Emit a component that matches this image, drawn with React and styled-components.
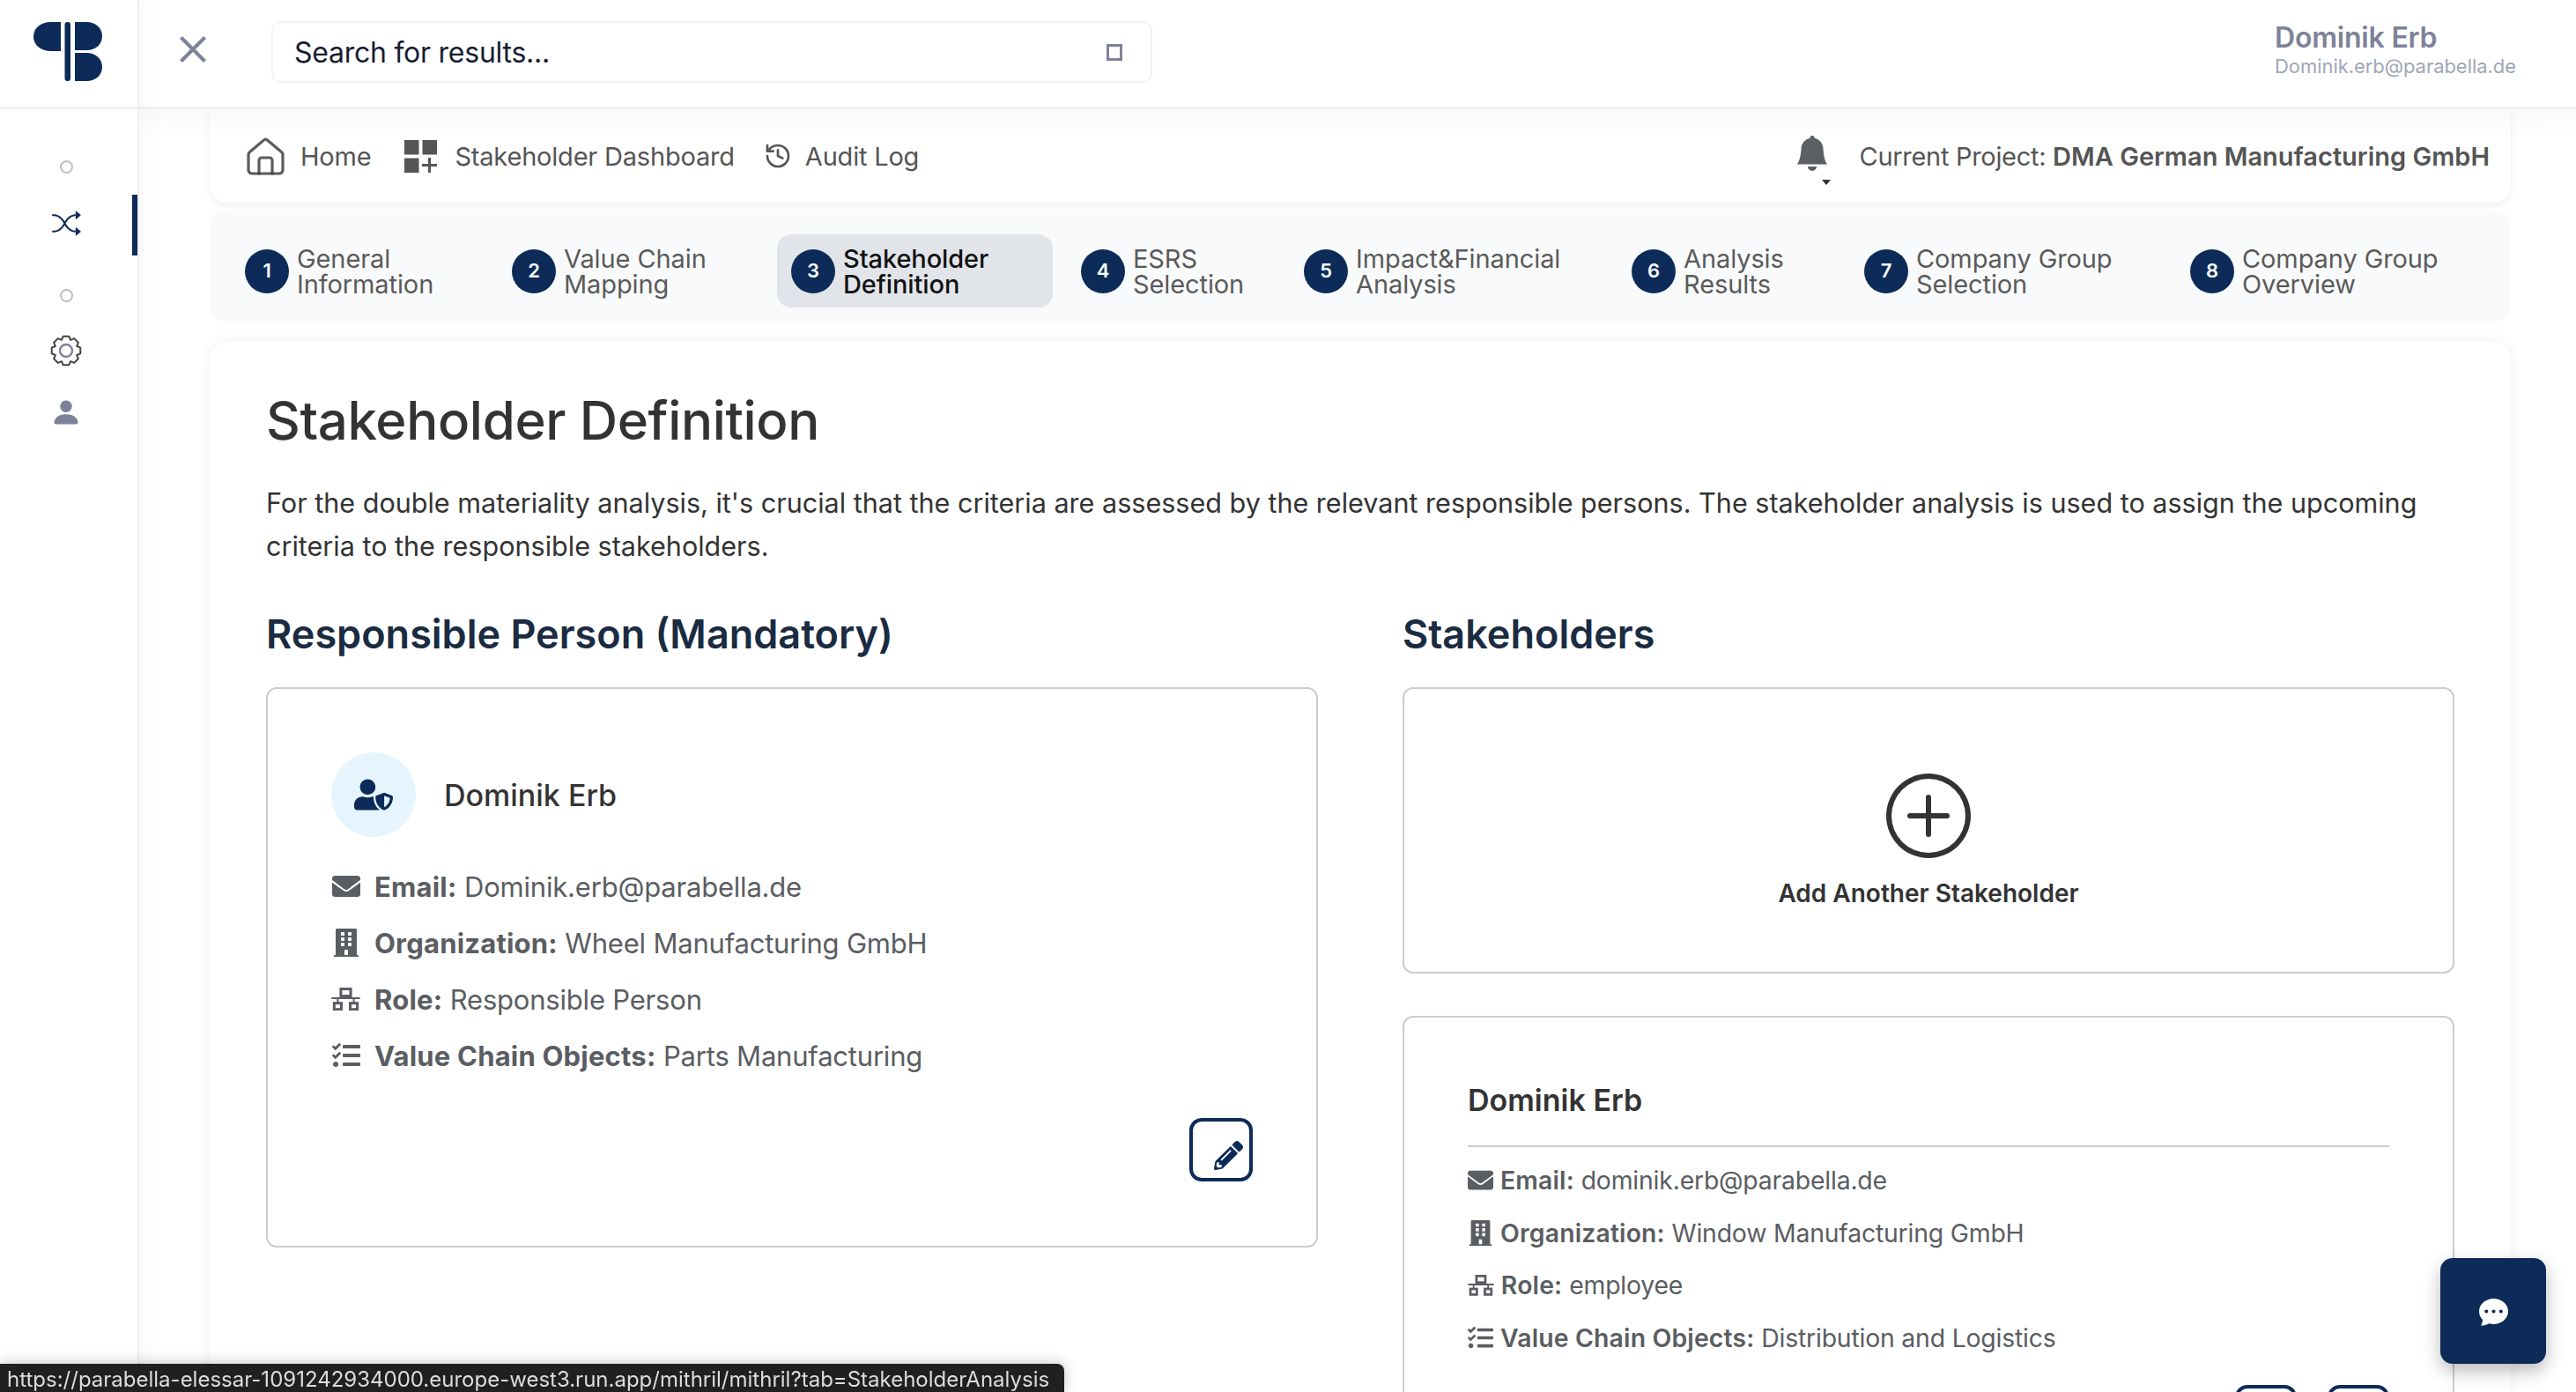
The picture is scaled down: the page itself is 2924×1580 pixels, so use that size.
import React from 'react';
import styled, { createGlobalStyle } from 'styled-components';
import { X, History } from 'lucide-react';
import { BsBellFill, BsChatDotsFill, BsPersonFill, BsPlusCircle, BsShuffle } from 'react-icons/bs';
import { FaBuilding, FaEnvelope, FaPencilAlt, FaTasks, FaUserShield } from 'react-icons/fa';

const NAVY = '#0c2b58';

const GlobalStyle = createGlobalStyle`
  html, body {
    margin: 0;
    height: 100%;
    overflow: hidden;
    background: #fff;
    font-family: Inter, "Liberation Sans", sans-serif;
  }
  * { box-sizing: border-box; }
`;

const steps = [
  { label: ['General', 'Information'], width: 287 },
  { label: ['Value Chain', 'Mapping'], width: 301 },
  { label: ['Stakeholder', 'Definition'], width: 313, active: true },
  { label: ['ESRS', 'Selection'], width: 237 },
  { label: ['Impact&Financial', 'Analysis'], width: 356 },
  { label: ['Analysis', 'Results'], width: 248 },
  { label: ['Company Group', 'Selection'], width: 354 },
  { label: ['Company Group', 'Overview'], width: 335 }
];

const gearPath = () => {
  // eight teeth round a centre of 20,20
  const pts = [];
  for (let i = 0; i < 8; i++) {
    const a = (i * Math.PI) / 4 - Math.PI / 2;
    const spread = [[-0.39, 13.2], [-0.2, 16.6], [0.2, 16.6], [0.39, 13.2]];
    spread.forEach(([d, r]) => {
      pts.push(`${(20 + r * Math.cos(a + d)).toFixed(2)} ${(20 + r * Math.sin(a + d)).toFixed(2)}`);
    });
  }
  return `M${pts.join('L')}Z`;
};

function Logo() {
  return (
    <svg width="78" height="67" viewBox="0 0 78 67" fill={NAVY}>
      <path d="M31 0H20C8 0 0 7 0 16.5S8 33 20 33H31Z" />
      <rect x="35.5" y="0" width="6.5" height="67" rx="3" />
      <path d="M47 0H60C71 0 78 7 78 16S71 32 60 32H47Z" />
      <path d="M47 35H60C71 35 78 42 78 51S71 67 60 67H47Z" />
    </svg>
  );
}

function HomeIcon() {
  return (
    <svg width="43" height="43" viewBox="0 0 43 43" fill="none" stroke="#3f3f3f" strokeWidth="3.2">
      <path opacity="0.85" d="M19.6 2.9 a3 3 0 0 1 3.8 0 L39.5 16.5 a4 4 0 0 1 1.5 3 V37 a4 4 0 0 1 -4 4 H6 a4 4 0 0 1 -4 -4 V19.5 a4 4 0 0 1 1.5 -3 Z" strokeLinejoin="round" />
      <path opacity="0.85" d="M14 42.5 V26 a3 3 0 0 1 3 -3 H26 a3 3 0 0 1 3 3 V42.5" />
    </svg>
  );
}

function DashIcon() {
  return (
    <svg width="37" height="37" viewBox="0 0 37 37" fill="#555">
      <rect x="0" y="0" width="16.5" height="16.5" />
      <rect x="20.5" y="0" width="16.5" height="16.5" />
      <rect x="0" y="20.5" width="16.5" height="16.5" />
      <rect x="27" y="20" width="3" height="17" />
      <rect x="20" y="27" width="17" height="3" />
    </svg>
  );
}

function GearIcon() {
  return (
    <svg width="40" height="40" viewBox="0 0 40 40" fill="none">
      <path d={gearPath()} stroke="#444" strokeWidth="2" strokeLinejoin="round" />
      <circle cx="20" cy="20" r="7" stroke="#7e8299" strokeWidth="2.4" />
    </svg>
  );
}

function RoleIcon() {
  return (
    <svg width="1.03em" height="0.82em" viewBox="0 0 32 26" fill="none" stroke="currentColor">
      <rect x="10.5" y="1.5" width="11" height="8" strokeWidth="3" />
      <path d="M0 12H32M16 9V12" strokeWidth="2" />
      <path d="M7 12V17M25 12V17" strokeWidth="2" />
      <rect x="3" y="17.5" width="8" height="7" strokeWidth="3" />
      <rect x="21" y="17.5" width="8" height="7" strokeWidth="3" />
    </svg>
  );
}

function InfoList({ compact, email, organization, role, objects }) {
  const rows = [
    { icon: <FaEnvelope />, label: 'Email:', value: email },
    { icon: <FaBuilding />, label: 'Organization:', value: organization },
    { icon: <RoleIcon />, label: 'Role:', value: role },
    { icon: <FaTasks />, label: 'Value Chain Objects:', value: objects }
  ];
  return (
    <InfoRows $compact={compact}>
      {rows.map((row) => (
        <InfoRow key={row.label} $compact={compact}>
          <InfoIcon $compact={compact}>{row.icon}</InfoIcon>
          <span><b>{row.label}</b> {row.value}</span>
        </InfoRow>
      ))}
    </InfoRows>
  );
}

export default function App() {
  return (
    <Shell>
      <GlobalStyle />
      <Sidebar>
        <Brand><Logo /></Brand>
        <SideNav>
          <SideDot />
          <SideItem $active $gap="15px"><BsShuffle size={33} /></SideItem>
          <SideDot $gap="27px" />
          <SideItem $gap="11px"><GearIcon /></SideItem>
          <SideItem $tone="#7e8299"><BsPersonFill size={36} /></SideItem>
        </SideNav>
      </Sidebar>

      <Main>
        <TopBar>
          <CloseButton><X size={54} strokeWidth={1.8} strokeLinecap="butt" /></CloseButton>
          <SearchBox>
            <span>Search for results...</span>
            <SearchMark />
          </SearchBox>
          <UserBlock>
            <UserName>Dominik Erb</UserName>
            <UserMail>Dominik.erb@parabella.de</UserMail>
          </UserBlock>
        </TopBar>

        <Content>
          <NavCard>
            <NavLink $gap="18px"><HomeIcon /><span>Home</span></NavLink>
            <NavLink $gap="20px" $offset="38px"><DashIcon /><span>Stakeholder Dashboard</span></NavLink>
            <NavLink $gap="15px" $offset="33px"><History size={32} strokeWidth={2} color="#555" /><span>Audit Log</span></NavLink>
            <ProjectInfo>
              <BellWrap><BsBellFill size={40} /></BellWrap>
              <span>Current Project: <b>DMA German Manufacturing GmbH</b></span>
            </ProjectInfo>
          </NavCard>

          <Stepper>
            {steps.map((step, i) => (
              <Step key={i} $active={step.active} $width={step.width}>
                <StepNumber>{i + 1}</StepNumber>
                <StepLabel>{step.label[0]}<br />{step.label[1]}</StepLabel>
              </Step>
            ))}
          </Stepper>

          <PageCard>
            <Title>Stakeholder Definition</Title>
            <Intro>
              For the double materiality analysis, it's crucial that the criteria are assessed by the relevant responsible persons. The stakeholder analysis is used to assign the upcoming criteria to the responsible stakeholders.
            </Intro>
            <Columns>
              <div>
                <SectionTitle>Responsible Person (Mandatory)</SectionTitle>
                <PersonCard>
                  <PersonHead>
                    <Avatar><FaUserShield size={44} /></Avatar>
                    <PersonName>Dominik Erb</PersonName>
                  </PersonHead>
                  <InfoList
                    email="Dominik.erb@parabella.de"
                    organization="Wheel Manufacturing GmbH"
                    role="Responsible Person"
                    objects="Parts Manufacturing"
                  />
                  <ActionRow $top="39px">
                    <EditButton><FaPencilAlt size={33} /></EditButton>
                  </ActionRow>
                </PersonCard>
              </div>
              <div>
                <SectionTitle>Stakeholders</SectionTitle>
                <AddCard>
                  <BsPlusCircle size={96} />
                  <AddLabel>Add Another Stakeholder</AddLabel>
                </AddCard>
                <StakeholderCard>
                  <StakeholderName>Dominik Erb</StakeholderName>
                  <Divider />
                  <InfoList
                    compact
                    email="dominik.erb@parabella.de"
                    organization="Window Manufacturing GmbH"
                    role="employee"
                    objects="Distribution and Logistics"
                  />
                  <ActionRow $top="24px" $gap="35px">
                    <EditButton $size="70px"><FaPencilAlt size={33} /></EditButton>
                    <EditButton $size="70px"><FaPencilAlt size={33} /></EditButton>
                  </ActionRow>
                </StakeholderCard>
              </div>
            </Columns>
          </PageCard>
        </Content>
      </Main>

      <ChatButton><BsChatDotsFill size={33} /></ChatButton>
      <StatusBar>https://parabella-elessar-1091242934000.europe-west3.run.app/mithril/mithril?tab=StakeholderAnalysis</StatusBar>
    </Shell>
  );
}

const Shell = styled.div`
  display: flex;
  width: 100%;
  height: 100vh;
  overflow: hidden;
  background: #fff;
`;

const Sidebar = styled.aside`
  position: relative;
  z-index: 3;
  flex: 0 0 158px;
  display: flex;
  flex-direction: column;
  background: #fff;
  border-right: 2px solid #eeeef5;
  box-shadow: 0 0 28px rgba(82, 63, 105, 0.06);
`;

const Brand = styled.div`
  height: 124px;
  padding: 25px 0 0 38px;
  margin-right: -2px;
  border-bottom: 3px solid #f1f1f5;
`;

const SideNav = styled.nav`
  display: flex;
  flex-direction: column;
  padding-top: 48px;
`;

const SideDot = styled.div`
  height: 34px;
  margin-top: ${(p) => p.$gap || 0};
  display: flex;
  align-items: center;
  justify-content: center;
  padding-right: 6px;
  &::before {
    content: '';
    width: 11px;
    height: 11px;
    border-radius: 50%;
    border: 2px solid #babcc8;
  }
`;

const SideItem = styled.div`
  position: relative;
  height: 70px;
  margin-top: ${(p) => p.$gap || 0};
  display: flex;
  align-items: center;
  justify-content: center;
  padding-right: 6px;
  padding-bottom: ${(p) => (p.$active ? '6px' : 0)};
  color: ${(p) => (p.$active ? NAVY : p.$tone || '#444')};
  &::after {
    content: ${(p) => (p.$active ? "''" : 'none')};
    position: absolute;
    right: 0;
    top: 0;
    width: 6px;
    height: 69px;
    background: ${NAVY};
  }
`;

const Main = styled.main`
  flex: 1;
  min-width: 0;
  display: flex;
  flex-direction: column;
`;

const TopBar = styled.header`
  position: relative;
  z-index: 2;
  flex: 0 0 124px;
  display: flex;
  align-items: flex-start;
  padding: 24px 68px 0 34px;
  background: #fff;
  border-bottom: 3px solid #f1f1f5;
  box-shadow: 0 10px 30px rgba(82, 63, 105, 0.04);
`;

const CloseButton = styled.div`
  width: 54px;
  height: 54px;
  margin: 5px 62px 0 0;
  color: #7e8299;
`;

const SearchBox = styled.div`
  width: 1000px;
  height: 70px;
  display: flex;
  align-items: center;
  justify-content: space-between;
  padding: 0 32px 0 24px;
  border: 2px solid #f3f3f5;
  border-radius: 10px;
  font-size: 32px;
  letter-spacing: -0.25px;
  color: #181c32;
`;

const SearchMark = styled.span`
  width: 18px;
  height: 19px;
  border: 3px solid #7e8299;
`;

const UserBlock = styled.div`
  margin-left: auto;
  display: flex;
  flex-direction: column;
`;

const UserName = styled.div`
  font-size: 32px;
  line-height: 38px;
  font-weight: 600;
  letter-spacing: -0.2px;
  color: #7e8299;
`;

const UserMail = styled.div`
  font-size: 22px;
  line-height: 27px;
  letter-spacing: -0.05px;
  color: #a1a5b7;
`;

const Content = styled.div`
  flex: 1;
  min-height: 0;
  padding: 0 74px 0 80px;
  background: #fff;
`;

const NavCard = styled.section`
  height: 106px;
  display: flex;
  align-items: center;
  padding: 0 24px 0 42px;
  background: #fff;
  border-radius: 0 0 20px 20px;
  box-shadow: 0 3px 10px rgba(30, 30, 60, 0.07);
`;

const NavLink = styled.div`
  display: flex;
  align-items: center;
  gap: ${(p) => p.$gap};
  margin-left: ${(p) => p.$offset || 0};
  font-size: 29px;
  letter-spacing: -0.2px;
  color: #555;
`;

const ProjectInfo = styled.div`
  margin-left: auto;
  display: flex;
  align-items: center;
  gap: 34px;
  font-size: 29px;
  letter-spacing: -0.3px;
  color: #555;
  b { font-weight: 600; letter-spacing: 0; }
`;

const BellWrap = styled.div`
  position: relative;
  display: flex;
  color: #5c6065;
  margin-top: -6px;
  &::after {
    content: '';
    position: absolute;
    right: -1px;
    bottom: -16px;
    border: 5px solid transparent;
    border-top: 6px solid #333;
    border-bottom: 0;
  }
`;

const Stepper = styled.nav`
  height: 125px;
  margin-top: 10px;
  display: flex;
  gap: 16px;
  padding: 26px 0 16px 24px;
  background: #f9fafb;
  border-radius: 16px;
`;

const Step = styled.div`
  flex: 0 0 ${(p) => p.$width}px;
  display: flex;
  align-items: center;
  gap: 9px;
  padding-left: 16px;
  border-radius: 16px;
  font-size: 29px;
  line-height: 29px;
  letter-spacing: -0.1px;
  background: ${(p) => (p.$active ? '#e1e5ea' : 'transparent')};
  color: ${(p) => (p.$active ? '#111' : '#5a5a5a')};
  font-weight: ${(p) => (p.$active ? 500 : 400)};
`;

const StepNumber = styled.span`
  flex: 0 0 50px;
  height: 50px;
  display: flex;
  align-items: center;
  justify-content: center;
  border-radius: 50%;
  background: ${NAVY};
  color: #fff;
  font-size: 22px;
  font-weight: 600;
`;

const StepLabel = styled.span`
  display: block;
`;

const PageCard = styled.section`
  margin-top: 23px;
  padding: 56px 64px 0;
  height: 1400px;
  background: #fff;
  border-radius: 20px;
  box-shadow: 0 0 14px rgba(60, 60, 90, 0.08);
`;

const Title = styled.h1`
  margin: -5px 0 0;
  font-size: 60px;
  line-height: 76px;
  font-weight: 500;
  letter-spacing: -0.35px;
  color: #333;
`;

const Intro = styled.p`
  margin: 32px 0 0;
  font-size: 30.55px;
  line-height: 48.5px;
  color: #333;
`;

const Columns = styled.div`
  display: grid;
  grid-template-columns: 1194px 1194px;
  gap: 96px;
  margin-top: 46px;
`;

const SectionTitle = styled.h2`
  margin: 0 0 30px;
  font-size: 45px;
  line-height: 60px;
  font-weight: 600;
  color: #1a2b42;
`;

const PersonCard = styled.div`
  height: 636px;
  padding: 72px 72px 0;
  border: 2px solid #ccc;
  border-radius: 12px;
`;

const PersonHead = styled.div`
  display: flex;
  align-items: center;
  gap: 32px;
`;

const Avatar = styled.div`
  width: 96px;
  height: 96px;
  display: flex;
  align-items: center;
  justify-content: center;
  border-radius: 50%;
  background: #e6f5fd;
  color: ${NAVY};
`;

const PersonName = styled.div`
  font-size: 34px;
  font-weight: 500;
  color: #333;
`;

const InfoRows = styled.div`
  display: flex;
  flex-direction: column;
  margin-top: ${(p) => (p.$compact ? '0' : '24px')};
`;

const InfoRow = styled.div`
  display: flex;
  align-items: center;
  gap: ${(p) => (p.$compact ? '8px' : '16px')};
  height: ${(p) => (p.$compact ? '59.5px' : '64px')};
  font-size: ${(p) => (p.$compact ? '28.4px' : '31px')};
  letter-spacing: -0.2px;
  color: #5a5d62;
  b {
    font-weight: ${(p) => (p.$compact ? 600 : 700)};
    letter-spacing: ${(p) => (p.$compact ? '0.15px' : '0.2px')};
  }
`;

const InfoIcon = styled.span`
  flex: 0 0 ${(p) => (p.$compact ? '29px' : '33px')};
  display: flex;
  justify-content: center;
  font-size: ${(p) => (p.$compact ? '29px' : '32px')};
`;

const ActionRow = styled.div`
  display: flex;
  justify-content: flex-end;
  gap: ${(p) => p.$gap || 0};
  margin-top: ${(p) => p.$top};
`;

const EditButton = styled.button`
  width: ${(p) => p.$size || '72px'};
  height: ${(p) => p.$size || '72px'};
  display: flex;
  align-items: center;
  justify-content: center;
  padding: 12px 0 0 16px;
  background: #fff;
  border: 4px solid ${NAVY};
  border-radius: 14px;
  color: ${NAVY};
`;

const AddCard = styled.div`
  height: 325px;
  display: flex;
  flex-direction: column;
  align-items: center;
  padding-top: 96px;
  border: 2px solid #ccc;
  border-radius: 12px;
  color: #333;
`;

const AddLabel = styled.div`
  margin-top: 22px;
  font-size: 28px;
  line-height: 36px;
  font-weight: 600;
`;

const StakeholderCard = styled.div`
  height: 660px;
  margin-top: 48px;
  padding: 72px 72px 0;
  border: 2px solid #ccc;
  border-radius: 12px;
`;

const StakeholderName = styled.div`
  font-size: 34px;
  line-height: 44px;
  font-weight: 600;
  color: #333;
`;

const Divider = styled.div`
  height: 2px;
  margin: 29px 0 8px;
  background: #ccc;
`;

const ChatButton = styled.div`
  position: fixed;
  z-index: 10;
  right: 34px;
  bottom: 32px;
  width: 120px;
  height: 120px;
  display: flex;
  align-items: center;
  justify-content: center;
  background: ${NAVY};
  border-radius: 14px;
  box-shadow: 0 8px 20px rgba(0, 0, 0, 0.28);
  color: #fff;
`;

const StatusBar = styled.div`
  position: fixed;
  z-index: 10;
  left: 0;
  bottom: 0;
  height: 32px;
  padding: 2px 17px 0 8px;
  background: #1f2020;
  border-top-right-radius: 8px;
  box-shadow: 0 0 16px rgba(0, 0, 0, 0.25);
  color: #dcdcdc;
  font-size: 24px;
  line-height: 32px;
  white-space: nowrap;
`;
